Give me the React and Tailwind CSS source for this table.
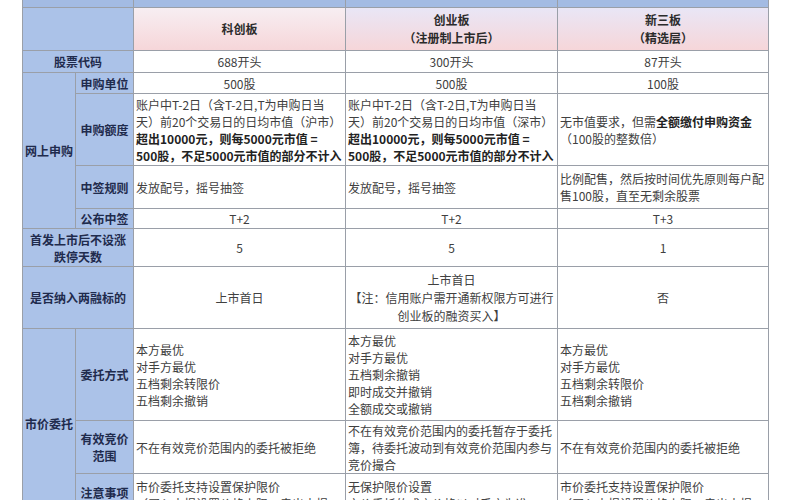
const font = { fontFamily: '"Noto Sans CJK SC", "Noto Sans", sans-serif' };

const Label = ({ className = "", children }) => (
  <div
    className={`bg-[#abc2e8] flex items-center justify-center text-center text-[12px] leading-[17px] font-bold text-[#1f2b4d] ${className}`}
  >
    {children}
  </div>
);

const Cell = ({ className = "", center, children }) => (
  <div
    className={`bg-white flex flex-col justify-center px-[2px] text-[12px] leading-[17px] text-[#404040] ${
      center ? "items-center text-center" : "items-start"
    } ${className}`}
  >
    {children}
  </div>
);

const Lines = ({ items }) => items.map((t) => <div key={t}>{t}</div>);

const App = () => {
  return (
    <div className="w-[800px] h-[500px] overflow-hidden bg-white" style={font}>
      <div className="ml-[22px] w-[747px] px-px pb-px bg-[#9a9fa8]">
        <div className="grid gap-px grid-cols-[52px_57px_211px_211px_210px] grid-rows-[7px_42px_21px_20px_71px_42px_19px_37px_61px_91px_52px_60px]">
          {/* top band */}
          <div className="col-span-2 bg-[#a3bbe3]" />
          <div className="bg-[#a3bbe3]" />
          <div className="bg-[#a3bbe3]" />
          <div className="bg-[#a3bbe3]" />

          {/* header */}
          <Label className="col-span-2" />
          <div className="bg-gradient-to-b from-[#f7eef2] to-[#f6d6d9] flex items-center justify-center text-[12px] font-bold text-[#2b2b2b]">
            科创板
          </div>
          <div className="bg-gradient-to-b from-[#e9e6f6] to-[#f6d6d9] flex flex-col items-center justify-center text-[12px] leading-[18px] font-bold text-[#2b2b2b]">
            <div>创业板</div>
            <div>（注册制上市后）</div>
          </div>
          <div className="bg-gradient-to-b from-[#e9e6f6] to-[#f6d6d9] flex flex-col items-center justify-center text-[12px] leading-[18px] font-bold text-[#2b2b2b]">
            <div>新三板</div>
            <div>（精选层）</div>
          </div>

          {/* 股票代码 */}
          <Label className="col-span-2">股票代码</Label>
          <Cell center>688开头</Cell>
          <Cell center>300开头</Cell>
          <Cell center>87开头</Cell>

          {/* 网上申购 */}
          <Label className="row-span-4">网上申购</Label>
          <Label>申购单位</Label>
          <Cell center>500股</Cell>
          <Cell center>500股</Cell>
          <Cell center>100股</Cell>

          <Label>申购额度</Label>
          <Cell>
            <div>账户中T-2日（含T-2日,T为申购日当</div>
            <div>天）前20个交易日的日均市值（沪市）</div>
            <div className="font-bold text-[#222]">超出10000元，则每5000元市值 =</div>
            <div className="font-bold text-[#222]">500股，不足5000元市值的部分不计入</div>
          </Cell>
          <Cell>
            <div>账户中T-2日（含T-2日,T为申购日当</div>
            <div>天）前20个交易日的日均市值（深市）</div>
            <div className="font-bold text-[#222]">超出10000元，则每5000元市值 =</div>
            <div className="font-bold text-[#222]">500股，不足5000元市值的部分不计入</div>
          </Cell>
          <Cell>
            <div>
              无市值要求，但需<span className="font-bold text-[#222]">全额缴付申购资金</span>
            </div>
            <div>（100股的整数倍）</div>
          </Cell>

          <Label>中签规则</Label>
          <Cell>发放配号，摇号抽签</Cell>
          <Cell>发放配号，摇号抽签</Cell>
          <Cell className="bg-[#f4f8f7]">
            <div>比例配售，然后按时间优先原则每户配</div>
            <div>售100股，直至无剩余股票</div>
          </Cell>

          <Label>公布中签</Label>
          <Cell center>T+2</Cell>
          <Cell center>T+2</Cell>
          <Cell center>T+3</Cell>

          {/* 涨跌停 */}
          <Label className="col-span-2">
            <div>
              <div>首发上市后不设涨</div>
              <div>跌停天数</div>
            </div>
          </Label>
          <Cell center>5</Cell>
          <Cell center>5</Cell>
          <Cell center>1</Cell>

          {/* 两融 */}
          <Label className="col-span-2">是否纳入两融标的</Label>
          <Cell center>上市首日</Cell>
          <Cell center className="leading-[18px]">
            <div>上市首日</div>
            <div>【注：信用账户需开通新权限方可进行</div>
            <div>创业板的融资买入】</div>
          </Cell>
          <Cell center>否</Cell>

          {/* 市价委托 */}
          <Label className="row-span-3 pb-[16px]">市价委托</Label>
          <Label>委托方式</Label>
          <Cell>
            <Lines items={["本方最优", "对手方最优", "五档剩余转限价", "五档剩余撤销"]} />
          </Cell>
          <Cell className="leading-[16.5px]">
            <Lines
              items={["本方最优", "对手方最优", "五档剩余撤销", "即时成交并撤销", "全额成交或撤销"]}
            />
          </Cell>
          <Cell>
            <Lines items={["本方最优", "对手方最优", "五档剩余转限价", "五档剩余撤销"]} />
          </Cell>

          <Label>
            <div>
              <div>有效竞价</div>
              <div>范围</div>
            </div>
          </Label>
          <Cell>不在有效竞价范围内的委托被拒绝</Cell>
          <Cell>
            <div>不在有效竞价范围内的委托暂存于委托</div>
            <div>簿，待委托波动到有效竞价范围内参与</div>
            <div>竞价撮合</div>
          </Cell>
          <Cell>不在有效竞价范围内的委托被拒绝</Cell>

          <Label className="items-start pt-[10px]">注意事项</Label>
          <Cell className="justify-start pt-[4px]">
            <div>市价委托支持设置保护限价</div>
            <div>（买入申报设置价格上限，卖出申报</div>
          </Cell>
          <Cell className="justify-start pt-[4px]">
            <div>无保护限价设置</div>
            <div>市价委托的成交价格以对手方为准</div>
          </Cell>
          <Cell className="justify-start pt-[4px]">
            <div>市价委托支持设置保护限价</div>
            <div>（买入申报设置价格上限，卖出申报</div>
          </Cell>
        </div>
      </div>
    </div>
  );
};

export default App;
